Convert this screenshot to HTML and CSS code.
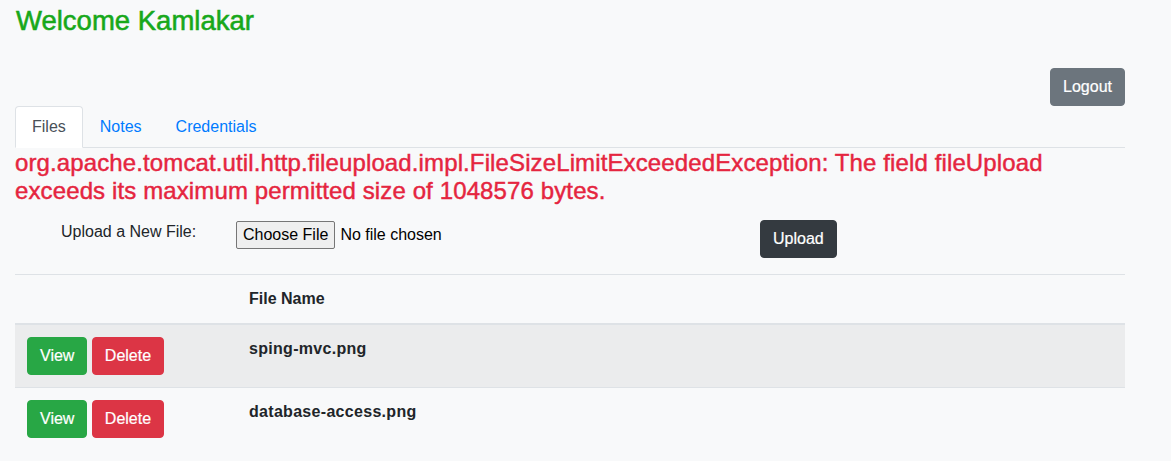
FILE: index.html
```html
<!DOCTYPE html>
<html lang="en">
<head>
<meta charset="utf-8">
<title>Home</title>
<link rel="stylesheet" href="styles.css">
</head>
<body>
<div class="container">
  <h1 class="welcome">Welcome Kamlakar</h1>
  <div class="logout-row">
    <button type="button" class="btn btn-secondary">Logout</button>
  </div>
  <ul class="nav-tabs">
    <li><a class="nav-link active" href="#files">Files</a></li>
    <li><a class="nav-link" href="#notes">Notes</a></li>
    <li><a class="nav-link" href="#credentials">Credentials</a></li>
  </ul>
  <h4 class="error">org.apache.tomcat.util.http.fileupload.impl.FileSizeLimitExceededException: The field fileUpload exceeds its maximum permitted size of 1048576 bytes.</h4>
  <form class="upload-row">
    <label class="upload-label">Upload a New File:</label>
    <div class="file-input">
      <button type="button" class="file-btn">Choose File</button>
      <span class="file-name">No file chosen</span>
    </div>
    <div><button type="button" class="btn btn-dark">Upload</button></div>
  </form>
  <table class="table">
    <thead>
      <tr><th class="col-actions"></th><th>File Name</th></tr>
    </thead>
    <tbody>
      <tr class="striped">
        <td><button type="button" class="btn btn-success">View</button> <button type="button" class="btn btn-danger">Delete</button></td>
        <th class="fname">sping-mvc.png</th>
      </tr>
      <tr>
        <td><button type="button" class="btn btn-success">View</button> <button type="button" class="btn btn-danger">Delete</button></td>
        <th class="fname">database-access.png</th>
      </tr>
    </tbody>
  </table>
</div>
</body>
</html>
```

FILE: styles.css
```css
* { box-sizing: border-box; }
html, body { margin: 0; padding: 0; }
body {
  background: #f8f9fa;
  font-family: "Liberation Sans", Arial, Helvetica, sans-serif;
  font-size: 16px;
  line-height: 1.5;
  color: #212529;
}
.container {
  width: 1110px;
  margin-left: 15px;
}
.welcome {
  margin: 4px 0 0 1px;
  font-size: 27.5px;
  font-weight: 400;
  line-height: 33px;
  color: #17a81a;
  -webkit-text-stroke: 0.55px #17a81a;
}
.logout-row {
  display: flex;
  justify-content: flex-end;
  margin-top: 31px;
}
.btn {
  display: inline-block;
  font-family: inherit;
  font-size: 16px;
  line-height: 24px;
  padding: 6px 12px;
  border: 1px solid transparent;
  border-radius: 4px;
  color: #fff;
  cursor: pointer;
  -webkit-text-stroke: 0.2px #fff;
}
.btn-secondary { background: #6c757d; border-color: #6c757d; }
.btn-dark { background: #343a40; border-color: #343a40; }
.btn-success { background: #28a745; border-color: #28a745; }
.btn-danger { background: #dc3545; border-color: #dc3545; }
.nav-tabs {
  list-style: none;
  display: flex;
  margin: 0;
  padding: 0;
  border-bottom: 1px solid #dee2e6;
}
.nav-tabs li { margin-bottom: -1px; }
.nav-link {
  display: block;
  padding: 8px 16px;
  border: 1px solid transparent;
  border-top-left-radius: 4px;
  border-top-right-radius: 4px;
  color: #007bff;
  text-decoration: none;
}
.nav-link.active {
  color: #495057;
  background: #fff;
  border-color: #dee2e6 #dee2e6 #fff;
}
.error {
  margin: 1px 0 8px;
  font-size: 24px;
  font-weight: 400;
  line-height: 28px;
  letter-spacing: 0.12px;
  color: #e5253f;
  -webkit-text-stroke: 0.45px #e5253f;
}
.upload-row {
  display: grid;
  grid-template-columns: 221px 524px auto;
  align-items: start;
  margin-top: 15px;
  margin-bottom: 16px;
}
.upload-label { padding-left: 46px; }
.file-input {
  display: flex;
  align-items: center;
  margin-top: 1px;
}
.file-btn {
  font-family: inherit;
  font-size: 16px;
  line-height: 18px;
  height: 28px;
  padding: 4px 6px;
  background: #efefef;
  border: 1px solid #767676;
  border-radius: 2px;
  color: #000;
}
.file-name {
  margin-left: 5px;
  color: #000;
}
.table {
  width: 100%;
  border-collapse: collapse;
}
.table th, .table td {
  padding: 12px;
  text-align: left;
  vertical-align: top;
  border-top: 1px solid #dee2e6;
}
.table th { font-weight: 700; }
.table th.fname { letter-spacing: 0.3px; }
.table thead th {
  border-bottom: 2px solid #dee2e6;
  vertical-align: bottom;
}
.table .col-actions { width: 20%; }
.table tr.striped { background: rgba(0, 0, 0, 0.05); }
```
